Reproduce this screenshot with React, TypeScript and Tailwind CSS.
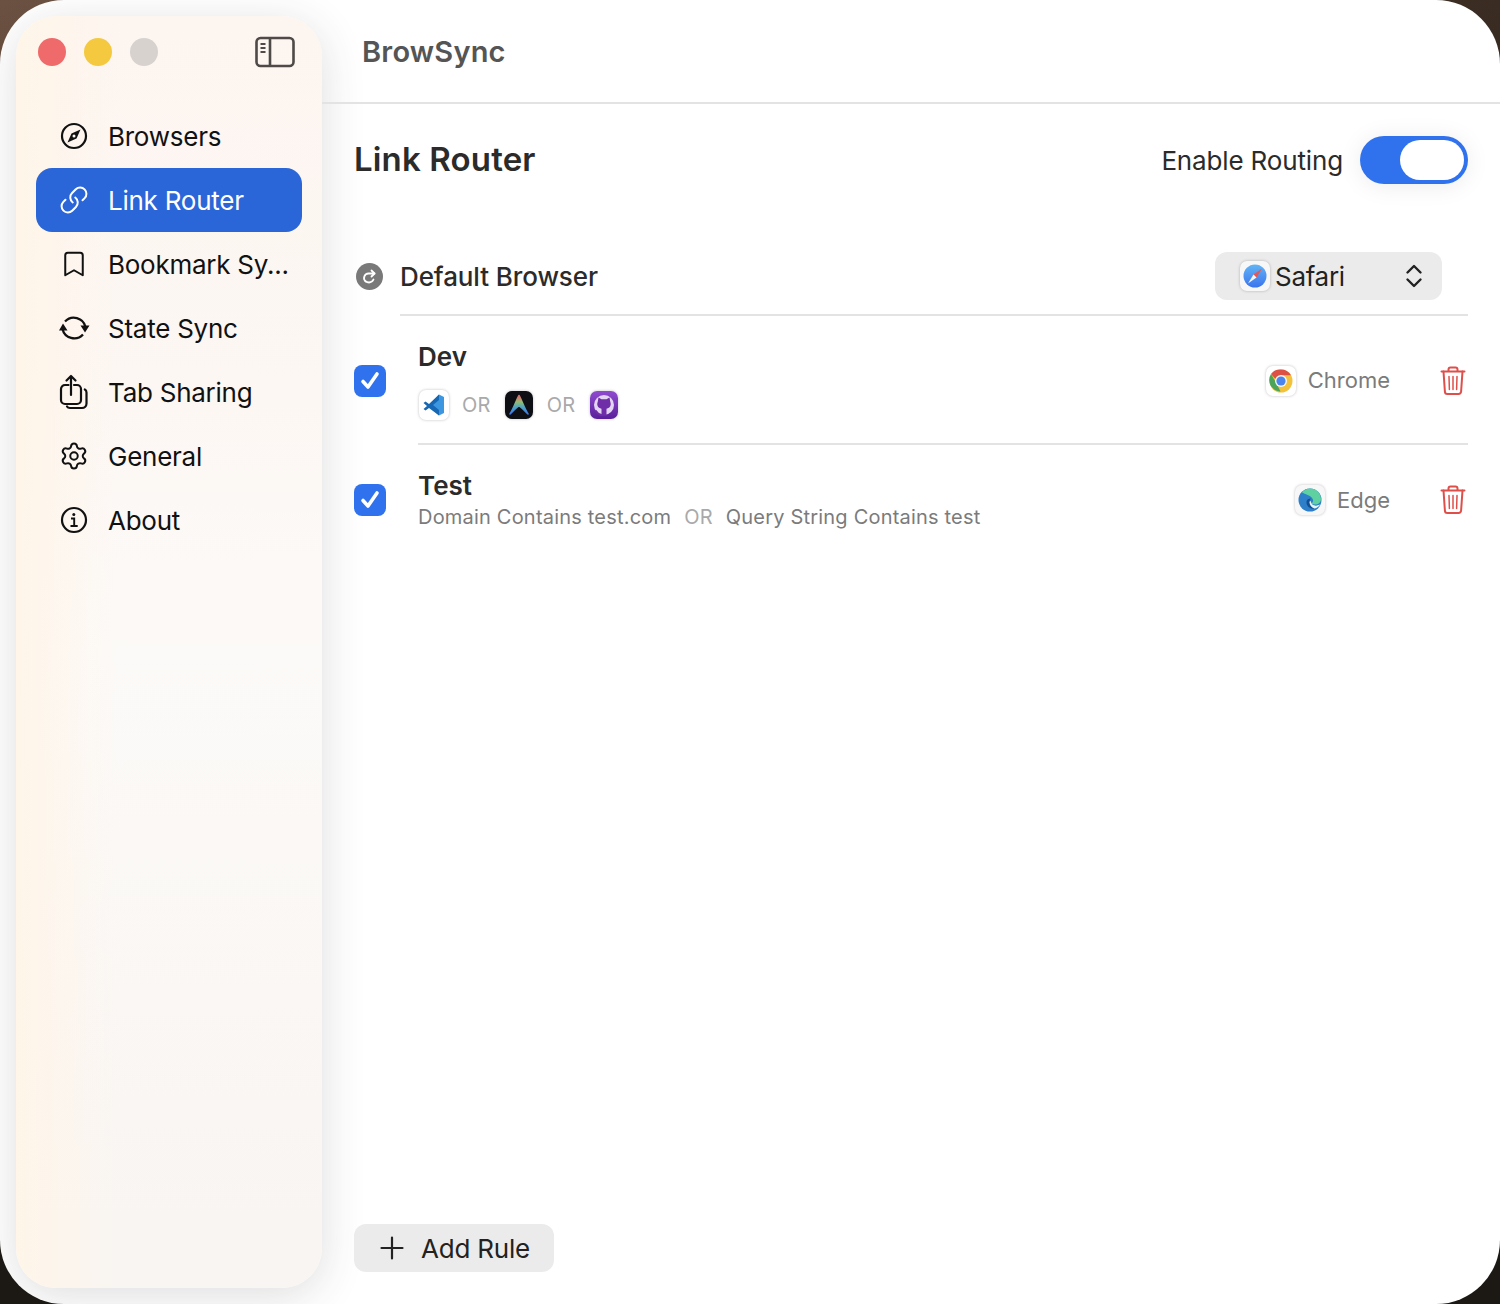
import { Bookmark, Link, Settings } from "lucide-react";
import type { ReactNode } from "react";

function CompassIcon() {
  return (
    <svg width="28" height="28" viewBox="0 0 28 28" fill="none">
      <circle cx="14" cy="14" r="12" stroke="currentColor" strokeWidth="2.2" />
      <path d="M20.500 7.500l-4 9-9 4 4-9z" fill="currentColor" />
      <circle cx="14" cy="14" r="1.500" fill="#fdf6f1" />
    </svg>
  );
}

function SyncIcon() {
  return (
    <svg width="32" height="28" viewBox="0 0 32 28" fill="none">
      <path d="M7 7.500A12 12 0 0 1 27.500 13" stroke="currentColor" strokeWidth="2.300" />
      <path d="M25 20.500A12 12 0 0 1 4.500 15" stroke="currentColor" strokeWidth="2.300" />
      <path d="M1 16.500L5 9.500l4.500 7zM22.500 11.500h9L27 18.500z" fill="currentColor" />
    </svg>
  );
}

function ShareIcon() {
  return (
    <svg width="30" height="36" viewBox="0 0 30 36" fill="none" stroke="currentColor" strokeWidth="2.2" strokeLinecap="round" strokeLinejoin="round">
      <path d="M9.500 11H6a4 4 0 0 0-4 4v11a4 4 0 0 0 4 4h12a4 4 0 0 0 4-4V15a4 4 0 0 0-4-4h-3" />
      <path d="M12 21V2M7.500 6.500L12 2l4.500 4.500" />
      <path d="M25.800 15.500c1 .5 1.700 1.500 1.700 3v11a4.500 4.500 0 0 1-4.500 4.500H11c-1.500 0-2.500-.6-3-1.500" />
    </svg>
  );
}

function InfoIcon() {
  return (
    <svg width="28" height="28" viewBox="0 0 28 28" fill="none" stroke="currentColor" strokeWidth="2.2">
      <circle cx="14" cy="14" r="12" />
      <path d="M11 12.500h3.200V20M10.500 20h7.200" strokeWidth="1.900" />
      <circle cx="13.800" cy="8.500" r="1.500" fill="currentColor" stroke="none" />
    </svg>
  );
}

function SidebarToggleIcon() {
  return (
    <svg width="40" height="32" viewBox="0 0 40 32" fill="none">
      <rect x="1.500" y="2" width="37" height="28" rx="4" stroke="#4f4a47" strokeWidth="2.600" />
      <path d="M15 2v28" stroke="#4f4a47" strokeWidth="2.600" />
      <path d="M5.500 8h5M5.500 12h5M5.500 16h5" stroke="#4f4a47" strokeWidth="2" />
    </svg>
  );
}

function TrashIcon() {
  return (
    <svg width="26" height="30" viewBox="0 0 26 30" fill="none" stroke="#de4f4a" strokeWidth="2" strokeLinecap="round" strokeLinejoin="round">
      <path d="M1.500 5.500h23" />
      <path d="M8.500 5V3.500A2 2 0 0 1 10.500 1.500h5a2 2 0 0 1 2 2V5" />
      <path d="M3.500 5.500l1.400 20a2.500 2.500 0 0 0 2.500 2.500h11.200a2.500 2.500 0 0 0 2.500-2.500l1.400-20" />
      <path d="M9 10.500l.4 13M13 10.500v13M17 10.500l-.4 13" strokeWidth="1.500" />
    </svg>
  );
}

function UpDownIcon() {
  return (
    <svg width="18" height="26" viewBox="0 0 18 26" fill="none" stroke="#222" strokeWidth="2.400" strokeLinecap="round" strokeLinejoin="round">
      <path d="M2.500 9.500L9 3l6.500 6.500" />
      <path d="M2.500 16.500L9 23l6.500-6.500" />
    </svg>
  );
}

function PlusIcon() {
  return (
    <svg width="24" height="24" viewBox="0 0 24 24" fill="none" stroke="#222" strokeWidth="2.200" strokeLinecap="round">
      <path d="M12 1.500v21M1.500 12h21" />
    </svg>
  );
}

function RedirectIcon() {
  return (
    <div className="flex h-[27px] w-[27px] items-center justify-center rounded-full bg-[#797979]">
      <svg width="17" height="17" viewBox="0 0 17 17" fill="none" stroke="white" strokeWidth="1.800" strokeLinecap="round" strokeLinejoin="round">
        <path d="M13.500 5.500H7.500a4.500 4.500 0 0 0-3 7.800" />
        <path d="M10.500 2.500l3 3-3 3" />
        <path d="M4.500 13.300c.9.700 2 1.200 3.500 1.200a5 5 0 0 0 4.500-3" />
      </svg>
    </div>
  );
}

function AppTile({ children, className }: { children: ReactNode; className: string }) {
  return (
    <div className={`flex shrink-0 items-center justify-center overflow-hidden rounded-[7px] shadow-[0_0_3px_rgba(0,0,0,0.25)] ${className}`}>
      {children}
    </div>
  );
}

function SafariIcon() {
  return (
    <AppTile className="h-[30px] w-[30px] bg-[#f7f7f8]">
      <svg width="26" height="26" viewBox="0 0 26 26">
        <defs>
          <linearGradient id="safari-bg" x1="0" y1="0" x2="0" y2="1">
            <stop offset="0" stopColor="#62b4f5" />
            <stop offset="1" stopColor="#3a74ee" />
          </linearGradient>
        </defs>
        <circle cx="13" cy="13" r="11.500" fill="url(#safari-bg)" />
        <path d="M20 5.500l-5.500 9-3-3z" fill="#e8574f" />
        <path d="M6 20.500l5.500-9 3 3z" fill="#f2f5fb" />
      </svg>
    </AppTile>
  );
}

function ChromeIcon() {
  return (
    <AppTile className="h-[30px] w-[30px] bg-white">
      <svg width="26" height="26" viewBox="0 0 26 26">
        <circle cx="13" cy="13" r="11.500" fill="#f3c23c" />
        <path d="M13 1.500A11.500 11.500 0 0 1 23 7.250H13l-5.500 3.700L3 5.900A11.500 11.500 0 0 1 13 1.500z" fill="#dc5144" />
        <path d="M3 5.900l5.500 9.600 4 7.900-1 .1A11.500 11.500 0 0 1 3 5.900z" fill="#4ba45a" />
        <circle cx="13" cy="13" r="6" fill="#f5f5f5" />
        <circle cx="13" cy="13" r="4.600" fill="#4a84ee" />
      </svg>
    </AppTile>
  );
}

function EdgeIcon() {
  return (
    <AppTile className="h-[30px] w-[30px] bg-[#f7f7f8]">
      <svg width="26" height="26" viewBox="0 0 26 26">
        <circle cx="13" cy="13" r="11.500" fill="#2e7fc9" />
        <path d="M5 5.500C8 2 11 1.500 13 1.500c6.500 0 11 5 11 10.500 0 3.500-2.500 5.500-6 5.500-2.500 0-3.500-1-3.500-1.500 2-.5 2-3.500.5-5C13.500 8.500 8 7 5 5.500z" fill="#5fd0a0" />
        <path d="M9.500 14.500c-.5 4 3 8 8 7-3-1-5-3.500-5-6.500 0-1.500.5-2.500 1.500-3.500-2.500 0-4.300 1-4.500 3z" fill="#124f92" />
        <path d="M12.500 15c0 3 2 5.500 5 6.500 2.500-.5 4.500-2 5.500-4-2 1-4 1.500-6 .8-2-.7-3-2-3.200-4.300-.8.200-1.300.5-1.300 1z" fill="#e8f4f2" />
      </svg>
    </AppTile>
  );
}

function VsCodeIcon() {
  return (
    <AppTile className="h-[30px] w-[30px] bg-white">
      <svg width="24" height="24" viewBox="0 0 24 24">
        <path d="M17 1.500l5 2.500v16l-5 2.500L7 12.500z" fill="#3c97e0" />
        <path d="M17 1.500L7 11 3.500 8.500 1.500 10 5 13l-3.500 3L3.500 17.500 7 15l10 7.500V17l-6-5 6-5z" fill="#1668b4" />
      </svg>
    </AppTile>
  );
}

function ArcIcon() {
  return (
    <AppTile className="h-7 w-7 bg-[#0d0f14]">
      <svg width="26" height="26" viewBox="0 0 26 26" fill="none">
        <defs>
          <linearGradient id="arc-stroke" x1="0" y1="0" x2="0" y2="1">
            <stop offset="0" stopColor="#e8636f" />
            <stop offset="0.35" stopColor="#93bd73" />
            <stop offset="0.65" stopColor="#4ba3c9" />
            <stop offset="1" stopColor="#3f74e8" />
          </linearGradient>
        </defs>
        <path d="M4 22C7.500 17 10 9 13 3.500 16 9 18.500 17 22 22 18.500 18.500 16 15.500 13 13.500 10 15.500 7.500 18.500 4 22z" fill="url(#arc-stroke)" stroke="url(#arc-stroke)" strokeWidth="1.600" strokeLinejoin="round" />
      </svg>
    </AppTile>
  );
}

function GithubDesktopIcon() {
  return (
    <AppTile className="h-7 w-7 bg-[linear-gradient(180deg,#8f4bd0,#5a1f9a)]">
      <svg width="26" height="26" viewBox="0 0 26 26" fill="none">
        <circle cx="13" cy="13" r="10" fill="#e3d4f2" />
        <path d="M7.500 5.500l3 1.800h5l3-1.800.8 4.500c1.100 2.700.2 6-3.800 6.700v7h-5v-7C6.500 16 5.600 12.700 6.700 10z" fill="#6f2da8" />
        <path d="M10.500 23c-2.800-.5-4.200-1.500-5.500-4" stroke="#6f2da8" strokeWidth="1.800" strokeLinecap="round" />
      </svg>
    </AppTile>
  );
}

function CheckBox() {
  return (
    <div className="flex h-8 w-8 shrink-0 items-center justify-center rounded-lg bg-[#3072ee]">
      <svg width="24" height="24" viewBox="0 0 24 24" fill="none" stroke="white" strokeWidth="3.600" strokeLinecap="round" strokeLinejoin="round">
        <path d="M5 12.500l5 5.500 9-13" />
      </svg>
    </div>
  );
}

const navItems: { label: string; icon: ReactNode; active?: boolean }[] = [
  { label: "Browsers", icon: <CompassIcon /> },
  { label: "Link Router", icon: <Link size={30} strokeWidth={1.6} className="-scale-x-100 rotate-90" />, active: true },
  { label: "Bookmark Sy...", icon: <Bookmark size={30} strokeWidth={1.6} /> },
  { label: "State Sync", icon: <SyncIcon /> },
  { label: "Tab Sharing", icon: <ShareIcon /> },
  { label: "General", icon: <Settings size={30} strokeWidth={1.6} /> },
  { label: "About", icon: <InfoIcon /> },
];

function Sidebar() {
  return (
    <aside className="flex w-[306px] shrink-0 flex-col rounded-[40px] bg-[linear-gradient(90deg,#fff5e9_0%,rgba(255,245,233,0)_32%),linear-gradient(180deg,#fdf5f0_0%,#fcf7f3_30%,#fcfaf8_50%,#f9f5f2_95%)] px-5 shadow-[0_8px_44px_rgba(50,50,60,0.16)]">
      <div className="flex h-[56px] items-center justify-between pl-[2px] pr-[7px] pt-[16px]">
        <div className="flex gap-[18px]">
          <div className="h-7 w-7 rounded-full bg-[#ef6a6a]" />
          <div className="h-7 w-7 rounded-full bg-[#f4c93f]" />
          <div className="h-7 w-7 rounded-full bg-[#d8d2cf]" />
        </div>
        <SidebarToggleIcon />
      </div>
      <nav className="mt-8 flex flex-col">
        {navItems.map((item) => (
          <div
            key={item.label}
            className={`flex h-16 items-center gap-[18px] rounded-2xl pl-5 text-[26px] font-normal tracking-[-0.25px] ${
              item.active ? "bg-[#2a66d8] text-white" : "text-[#111]"
            }`}
          >
            <span className="flex h-9 w-9 shrink-0 items-center justify-center">{item.icon}</span>
            <span className="-ml-[2px] pt-[1px]">{item.label}</span>
          </div>
        ))}
      </nav>
    </aside>
  );
}

function RuleTarget({ icon, name }: { icon: ReactNode; name: string }) {
  return (
    <div className="flex items-center gap-3">
      {icon}
      <span className="text-[22px] text-[#7b7b7b]">{name}</span>
    </div>
  );
}

export default function App() {
  return (
    <div className="h-[1304px] w-full bg-[linear-gradient(180deg,rgba(28,24,19,0)_0%,#1c1813_60%),linear-gradient(90deg,#6b5141,#3a2c22)] font-['Inter','Noto_Sans',sans-serif]">
      <div className="flex h-full overflow-hidden rounded-[64px] bg-white p-4 pr-0">
        <Sidebar />
        <main className="-my-4 flex min-w-0 flex-1 flex-col">
          <header className="flex h-[104px] shrink-0 items-center border-b-2 border-[#e3e3e3] pl-10 pt-[2px] text-[29px] font-semibold tracking-[0.2px] text-[#555]">
            BrowSync
          </header>
          <section className="flex flex-1 flex-col pb-8 pl-8 pr-8">
            <div className="flex h-[112px] shrink-0 items-center justify-between">
              <h1 className="text-[33px] font-semibold tracking-[0.15px] text-[#2b2b2b]">Link Router</h1>
              <div className="flex items-center gap-[17px]">
                <span className="text-[26px] tracking-[-0.15px] text-[#2b2b2b]">Enable Routing</span>
                <div className="flex h-12 w-[108px] items-center justify-end rounded-full bg-[#3072ee] pr-1 shadow-[0_2px_24px_rgba(0,0,0,0.08)]">
                  <div className="h-10 w-16 rounded-full bg-white" />
                </div>
              </div>
            </div>

            <div className="mt-[21px] flex items-center">
              <span className="ml-[2px]">
                <RedirectIcon />
              </span>
              <div className="ml-[17px] flex flex-1 items-center justify-between border-b-2 border-[#e3e3e3] pb-[14px] pt-[15px]">
                <span className="text-[26px] font-medium tracking-[-0.1px] text-[#2b2b2b]">Default Browser</span>
                <div className="mr-[26px] flex h-12 w-[227px] items-center rounded-xl bg-[#ebebeb] pl-[25px] pr-[19px]">
                  <SafariIcon />
                  <span className="ml-[5px] flex-1 text-[26px] tracking-[-0.3px] text-[#222]">Safari</span>
                  <UpDownIcon />
                </div>
              </div>
            </div>

            <div className="flex items-center gap-8">
              <CheckBox />
              <div className="flex h-[129px] flex-1 items-center justify-between border-b-2 border-[#e3e3e3] pt-[2px]">
                <div>
                  <div className="text-[26px] font-semibold leading-[32px] text-[#2b2b2b]">Dev</div>
                  <div className="ml-[1px] mt-[17px] flex items-center text-[20px] tracking-[0.3px] text-[#a9a9a9]">
                    <VsCodeIcon />
                    <span className="ml-[13px]">OR</span>
                    <span className="ml-[14px]">
                      <ArcIcon />
                    </span>
                    <span className="ml-[14px]">OR</span>
                    <span className="ml-[14px]">
                      <GithubDesktopIcon />
                    </span>
                  </div>
                </div>
                <div className="mr-[2px] flex items-center gap-[50px]">
                  <RuleTarget icon={<ChromeIcon />} name="Chrome" />
                  <TrashIcon />
                </div>
              </div>
            </div>

            <div className="flex items-center gap-8">
              <CheckBox />
              <div className="flex h-[110px] flex-1 items-center justify-between">
                <div className="pt-[2px]">
                  <div className="text-[26px] font-semibold leading-[32px] text-[#2b2b2b]">Test</div>
                  <div className="flex items-center gap-[13px] text-[20px] leading-[30px] tracking-[0.2px] text-[#7b7b7b]">
                    <span>Domain Contains test.com</span>
                    <span className="text-[#a9a9a9]">OR</span>
                    <span>Query String Contains test</span>
                  </div>
                </div>
                <div className="mr-[2px] flex items-center gap-[50px]">
                  <RuleTarget icon={<EdgeIcon />} name="Edge" />
                  <TrashIcon />
                </div>
              </div>
            </div>

            <button className="mt-auto flex h-12 w-[200px] items-center gap-[17px] rounded-xl bg-[#ebebeb] pl-[26px] text-[26px] tracking-[-0.2px] text-[#222]">
              <PlusIcon />
              Add Rule
            </button>
          </section>
        </main>
      </div>
    </div>
  );
}
